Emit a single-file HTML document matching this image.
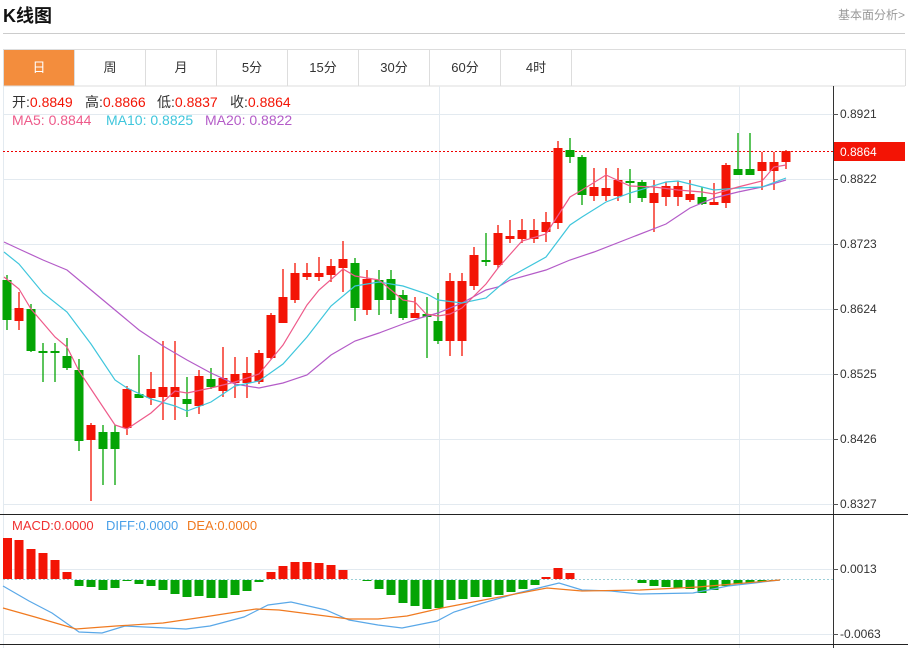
<!DOCTYPE html>
<html><head><meta charset="utf-8"><style>
body{margin:0;width:908px;height:648px;background:#fff;overflow:hidden;font-family:"Liberation Sans","Noto Sans CJK SC",sans-serif;position:relative}
.t{position:absolute;left:3px;top:2px;font-size:18px;font-weight:bold;color:#111}
.r{position:absolute;right:3px;top:6px;font-size:12px;color:#999}
.hl{position:absolute;left:3px;top:33px;width:902px;height:1px;background:#ccc}
.tabs{position:absolute;left:3px;top:49px;width:901px;height:36px;border:1px solid #ddd;border-bottom:none;display:flex}
.tabs div{width:70px;border-right:1px solid #ddd;text-align:center;line-height:36px;font-size:13px;color:#333}
.tabs div.a{background:#f38d3d;color:#fff}
svg{position:absolute;left:0;top:0}
</style></head><body>
<div class="t">K线图</div><div class="r">基本面分析&gt;</div><div class="hl"></div>
<div class="tabs"><div class="a">日</div><div>周</div><div>月</div><div>5分</div><div>15分</div><div>30分</div><div>60分</div><div>4时</div></div>
<svg width="908" height="648" font-family="Liberation Sans, Noto Sans CJK SC, sans-serif">
<g stroke="#e3eaf0" stroke-width="1">
<line x1="3" y1="86" x2="905" y2="86" stroke="#ddd"/>
<line x1="3" y1="114.5" x2="833" y2="114.5"/><line x1="3" y1="179.5" x2="833" y2="179.5"/><line x1="3" y1="244.5" x2="833" y2="244.5"/><line x1="3" y1="309.5" x2="833" y2="309.5"/><line x1="3" y1="374.5" x2="833" y2="374.5"/><line x1="3" y1="439.5" x2="833" y2="439.5"/><line x1="3" y1="504.5" x2="833" y2="504.5"/>
<line x1="3" y1="569.5" x2="833" y2="569.5"/><line x1="3" y1="634.5" x2="833" y2="634.5"/>
<line x1="439.5" y1="86" x2="439.5" y2="648"/><line x1="739.5" y1="86" x2="739.5" y2="648"/>
<line x1="3.5" y1="86" x2="3.5" y2="648"/>
</g>
<line x1="833.5" y1="86" x2="833.5" y2="648" stroke="#333"/>
<line x1="0" y1="514.5" x2="908" y2="514.5" stroke="#222"/>
<line x1="0" y1="644.5" x2="908" y2="644.5" stroke="#222"/>
<g stroke="#555"><line x1="833" y1="114.5" x2="838" y2="114.5"/><line x1="833" y1="179.5" x2="838" y2="179.5"/><line x1="833" y1="244.5" x2="838" y2="244.5"/><line x1="833" y1="309.5" x2="838" y2="309.5"/><line x1="833" y1="374.5" x2="838" y2="374.5"/><line x1="833" y1="439.5" x2="838" y2="439.5"/><line x1="833" y1="504.5" x2="838" y2="504.5"/><line x1="833" y1="569.5" x2="838" y2="569.5"/><line x1="833" y1="634.5" x2="838" y2="634.5"/></g>
<g font-size="12" fill="#333"><text x="840" y="118">0.8921</text><text x="840" y="183">0.8822</text><text x="840" y="248">0.8723</text><text x="840" y="313">0.8624</text><text x="840" y="378">0.8525</text><text x="840" y="443">0.8426</text><text x="840" y="508">0.8327</text><text x="840" y="573">0.0013</text><text x="840" y="638">-0.0063</text></g>
<line x1="3" y1="151.5" x2="833" y2="151.5" stroke="#e00" stroke-dasharray="2,2"/>
<rect x="834" y="142" width="71" height="19" fill="#f31405"/><text x="840" y="156" font-size="12" fill="#fff">0.8864</text>
<g font-size="14">
<text x="12" y="107" fill="#333">开:<tspan fill="#f31405">0.8849</tspan></text>
<text x="85" y="107" fill="#333">高:<tspan fill="#f31405">0.8866</tspan></text>
<text x="157" y="107" fill="#333">低:<tspan fill="#f31405">0.8837</tspan></text>
<text x="230" y="107" fill="#333">收:<tspan fill="#f31405">0.8864</tspan></text>
<text x="12" y="125" fill="#ee5a8a">MA5: 0.8844</text>
<text x="106" y="125" fill="#3fc6dc">MA10: 0.8825</text>
<text x="205" y="125" fill="#b45cc8">MA20: 0.8822</text>
</g>
<g font-size="13">
<text x="12" y="530" fill="#f03030">MACD:0.0000</text>
<text x="106" y="530" fill="#4aa0e8">DIFF:0.0000</text>
<text x="187" y="530" fill="#f07a20">DEA:0.0000</text>
</g>
<g stroke="#04a404" stroke-width="1.3">
<line x1="7" y1="275" x2="7" y2="330"/><line x1="31" y1="304" x2="31" y2="352"/><line x1="43" y1="343" x2="43" y2="382"/><line x1="55" y1="343" x2="55" y2="382"/><line x1="67" y1="338" x2="67" y2="370"/><line x1="79" y1="359" x2="79" y2="451"/><line x1="103" y1="425" x2="103" y2="485"/><line x1="115" y1="425" x2="115" y2="485"/><line x1="139" y1="355" x2="139" y2="398"/><line x1="187" y1="377" x2="187" y2="417"/><line x1="211" y1="368" x2="211" y2="389"/><line x1="355" y1="258" x2="355" y2="321"/><line x1="379" y1="270" x2="379" y2="315"/><line x1="391" y1="270" x2="391" y2="314"/><line x1="403" y1="290" x2="403" y2="320"/><line x1="427" y1="297" x2="427" y2="358"/><line x1="438" y1="293" x2="438" y2="344"/><line x1="486" y1="233" x2="486" y2="266"/><line x1="570" y1="138" x2="570" y2="163"/><line x1="582" y1="155" x2="582" y2="205"/><line x1="630" y1="169" x2="630" y2="203"/><line x1="642" y1="180" x2="642" y2="202"/><line x1="702" y1="187" x2="702" y2="205"/><line x1="738" y1="133" x2="738" y2="175"/><line x1="750" y1="133" x2="750" y2="175"/>
</g>
<g fill="#04a404">
<rect x="2.5" y="280" width="9" height="40"/><rect x="26.5" y="309" width="9" height="42"/><rect x="38.5" y="351" width="9" height="2"/><rect x="50.5" y="351" width="9" height="2"/><rect x="62.5" y="356" width="9" height="12"/><rect x="74.5" y="370" width="9" height="71"/><rect x="98.5" y="432" width="9" height="17"/><rect x="110.5" y="432" width="9" height="17"/><rect x="134.5" y="394" width="9" height="4"/><rect x="182.5" y="399" width="9" height="5"/><rect x="206.5" y="379" width="9" height="8"/><rect x="350.5" y="263" width="9" height="45"/><rect x="374.5" y="280" width="9" height="20"/><rect x="386.5" y="279" width="9" height="21"/><rect x="398.5" y="295" width="9" height="23"/><rect x="422.5" y="314" width="9" height="3"/><rect x="433.5" y="321" width="9" height="20"/><rect x="481.5" y="260" width="9" height="2"/><rect x="565.5" y="150" width="9" height="7"/><rect x="577.5" y="157" width="9" height="38"/><rect x="625.5" y="181" width="9" height="2"/><rect x="637.5" y="182" width="9" height="16"/><rect x="697.5" y="197" width="9" height="7"/><rect x="733.5" y="169" width="9" height="6"/><rect x="745.5" y="169" width="9" height="6"/>
</g>
<g stroke="#f31405" stroke-width="1.3">
<line x1="19" y1="292" x2="19" y2="330"/><line x1="91" y1="423" x2="91" y2="501"/><line x1="127" y1="386" x2="127" y2="435"/><line x1="151" y1="372" x2="151" y2="405"/><line x1="163" y1="341" x2="163" y2="420"/><line x1="175" y1="341" x2="175" y2="420"/><line x1="199" y1="370" x2="199" y2="414"/><line x1="223" y1="347" x2="223" y2="397"/><line x1="235" y1="357" x2="235" y2="398"/><line x1="247" y1="357" x2="247" y2="398"/><line x1="259" y1="350" x2="259" y2="384"/><line x1="271" y1="313" x2="271" y2="359"/><line x1="283" y1="269" x2="283" y2="323"/><line x1="295" y1="263" x2="295" y2="303"/><line x1="307" y1="263" x2="307" y2="280"/><line x1="319" y1="257" x2="319" y2="281"/><line x1="331" y1="259" x2="331" y2="282"/><line x1="343" y1="241" x2="343" y2="292"/><line x1="367" y1="270" x2="367" y2="315"/><line x1="415" y1="297" x2="415" y2="318"/><line x1="450" y1="273" x2="450" y2="356"/><line x1="462" y1="273" x2="462" y2="356"/><line x1="474" y1="247" x2="474" y2="290"/><line x1="498" y1="225" x2="498" y2="268"/><line x1="510" y1="220" x2="510" y2="243"/><line x1="522" y1="219" x2="522" y2="243"/><line x1="534" y1="219" x2="534" y2="243"/><line x1="546" y1="212" x2="546" y2="242"/><line x1="558" y1="141" x2="558" y2="229"/><line x1="594" y1="168" x2="594" y2="201"/><line x1="606" y1="168" x2="606" y2="201"/><line x1="618" y1="168" x2="618" y2="201"/><line x1="654" y1="180" x2="654" y2="232"/><line x1="666" y1="182" x2="666" y2="206"/><line x1="678" y1="181" x2="678" y2="206"/><line x1="690" y1="180" x2="690" y2="202"/><line x1="714" y1="183" x2="714" y2="205"/><line x1="726" y1="163" x2="726" y2="208"/><line x1="762" y1="152" x2="762" y2="190"/><line x1="774" y1="152" x2="774" y2="190"/><line x1="786" y1="150" x2="786" y2="169"/>
</g>
<g fill="#f31405">
<rect x="14.5" y="308" width="9" height="13"/><rect x="86.5" y="425" width="9" height="15"/><rect x="122.5" y="389" width="9" height="39"/><rect x="146.5" y="389" width="9" height="9"/><rect x="158.5" y="387" width="9" height="10"/><rect x="170.5" y="387" width="9" height="10"/><rect x="194.5" y="376" width="9" height="30"/><rect x="218.5" y="378" width="9" height="13"/><rect x="230.5" y="374" width="9" height="9"/><rect x="242.5" y="373" width="9" height="10"/><rect x="254.5" y="353" width="9" height="29"/><rect x="266.5" y="315" width="9" height="43"/><rect x="278.5" y="297" width="9" height="26"/><rect x="290.5" y="273" width="9" height="27"/><rect x="302.5" y="273" width="9" height="4"/><rect x="314.5" y="273" width="9" height="4"/><rect x="326.5" y="266" width="9" height="9"/><rect x="338.5" y="259" width="9" height="9"/><rect x="362.5" y="279" width="9" height="31"/><rect x="410.5" y="313" width="9" height="5"/><rect x="445.5" y="281" width="9" height="60"/><rect x="457.5" y="281" width="9" height="60"/><rect x="469.5" y="255" width="9" height="31"/><rect x="493.5" y="233" width="9" height="32"/><rect x="505.5" y="236" width="9" height="3"/><rect x="517.5" y="230" width="9" height="9"/><rect x="529.5" y="230" width="9" height="9"/><rect x="541.5" y="222" width="9" height="10"/><rect x="553.5" y="148" width="9" height="75"/><rect x="589.5" y="187" width="9" height="9"/><rect x="601.5" y="188" width="9" height="8"/><rect x="613.5" y="180" width="9" height="16"/><rect x="649.5" y="193" width="9" height="10"/><rect x="661.5" y="186" width="9" height="11"/><rect x="673.5" y="186" width="9" height="11"/><rect x="685.5" y="194" width="9" height="6"/><rect x="709.5" y="202" width="9" height="3"/><rect x="721.5" y="165" width="9" height="38"/><rect x="757.5" y="162" width="9" height="9"/><rect x="769.5" y="162" width="9" height="9"/><rect x="781.5" y="151" width="9" height="11"/>
</g>
<g fill="none" stroke-width="1.2">
<polyline stroke="#b45cc8" points="4,242 19,249 43,260 67,270 91,290 115,310 139,330 163,346 187,360 211,373 235,384 259,388 283,383 307,375 331,355 355,341 379,333 403,324 420,318 438,313 462,303 486,290 498,287 510,280 546,270 570,260 594,252 630,238 666,224 690,208 714,198 738,192 762,187 786,180"/>
<polyline stroke="#3fc6dc" points="4,252 19,264 43,293 67,312 91,344 115,380 127,388 151,399 175,406 187,411 211,402 235,386 259,381 283,364 307,337 331,306 355,286 379,282 403,286 427,294 438,300 462,303 486,298 510,277 546,257 570,225 582,217 606,202 630,193 666,182 678,181 690,184 714,190 738,188 762,187 786,178"/>
<polyline stroke="#ee5a8a" points="4,277 19,289 31,309 55,337 67,347 79,371 91,389 115,425 127,429 151,413 175,391 187,393 211,388 235,382 259,374 283,345 307,305 319,290 343,269 355,276 379,280 403,300 415,302 426,314 438,316 450,314 462,308 486,284 498,268 522,241 546,234 570,197 582,190 606,175 630,186 654,187 678,190 702,192 714,194 738,187 762,181 774,167 786,165"/>
</g>
<line x1="3" y1="579.5" x2="833" y2="579.5" stroke="#9ccfd8" stroke-dasharray="2,2"/>
<g fill="#f31405">
<rect x="3" y="538" width="9" height="41"/><rect x="14.5" y="540" width="9" height="39"/><rect x="26.5" y="549" width="9" height="30"/><rect x="38.5" y="553" width="9" height="26"/><rect x="50.5" y="560" width="9" height="19"/><rect x="62.5" y="572" width="9" height="7"/>
<rect x="266.5" y="572" width="9" height="7"/><rect x="278.5" y="566" width="9" height="13"/><rect x="290.5" y="562" width="9" height="17"/><rect x="302.5" y="562" width="9" height="17"/><rect x="314.5" y="563" width="9" height="16"/><rect x="326.5" y="565" width="9" height="14"/><rect x="338.5" y="570" width="9" height="9"/>
<rect x="541.5" y="577" width="9" height="2"/><rect x="553.5" y="568" width="9" height="11"/><rect x="565.5" y="573" width="9" height="6"/>
</g>
<g fill="#04a404">
<rect x="74.5" y="580" width="9" height="6"/><rect x="86.5" y="580" width="9" height="7"/><rect x="98.5" y="580" width="9" height="10"/><rect x="110.5" y="580" width="9" height="8"/><rect x="122.5" y="580" width="9" height="1"/><rect x="134.5" y="580" width="9" height="4"/><rect x="146.5" y="580" width="9" height="6"/><rect x="158.5" y="580" width="9" height="10"/><rect x="170.5" y="580" width="9" height="14"/><rect x="182.5" y="580" width="9" height="17"/><rect x="194.5" y="580" width="9" height="16"/><rect x="206.5" y="580" width="9" height="18"/><rect x="218.5" y="580" width="9" height="18"/><rect x="230.5" y="580" width="9" height="15"/><rect x="242.5" y="580" width="9" height="11"/><rect x="254.5" y="580" width="9" height="2"/>
<rect x="362.5" y="580" width="9" height="1"/><rect x="374.5" y="580" width="9" height="9"/><rect x="386.5" y="580" width="9" height="15"/><rect x="398.5" y="580" width="9" height="23"/><rect x="410.5" y="580" width="9" height="26"/><rect x="422.5" y="580" width="9" height="29"/><rect x="434.5" y="580" width="9" height="28"/><rect x="446.5" y="580" width="9" height="20"/><rect x="458.5" y="580" width="9" height="19"/><rect x="470.5" y="580" width="9" height="17"/><rect x="482.5" y="580" width="9" height="17"/><rect x="494.5" y="580" width="9" height="15"/><rect x="506.5" y="580" width="9" height="12"/><rect x="518.5" y="580" width="9" height="9"/><rect x="530.5" y="580" width="9" height="5"/>
<rect x="637.5" y="580" width="9" height="3"/><rect x="649.5" y="580" width="9" height="6"/><rect x="661.5" y="580" width="9" height="7"/><rect x="673.5" y="580" width="9" height="8"/><rect x="685.5" y="580" width="9" height="9"/><rect x="697.5" y="580" width="9" height="13"/><rect x="709.5" y="580" width="9" height="10"/><rect x="721.5" y="580" width="9" height="6"/><rect x="733.5" y="580" width="9" height="4"/><rect x="745.5" y="580" width="9" height="3"/><rect x="757.5" y="580" width="9" height="2"/><rect x="769.5" y="580" width="9" height="1"/>
</g>
<g fill="none" stroke-width="1.2">
<polyline stroke="#5aa8e8" points="3,586 29,601 52,613 79,632 102,633 125,626 186,629 210,626 244,617 268,605 291,602 326,610 349,620 378,625 402,628 437,621 454,612 483,603 518,593 559,583 582,590 611,591 640,594 693,593 728,586 780,580"/>
<polyline stroke="#f07a20" points="3,608 35,617 76,629 116,626 163,623 204,617 256,609 279,610 349,619 378,619 407,616 442,608 489,599 547,588 582,591 640,590 698,587 780,580"/>
</g>
</svg>
</body></html>
